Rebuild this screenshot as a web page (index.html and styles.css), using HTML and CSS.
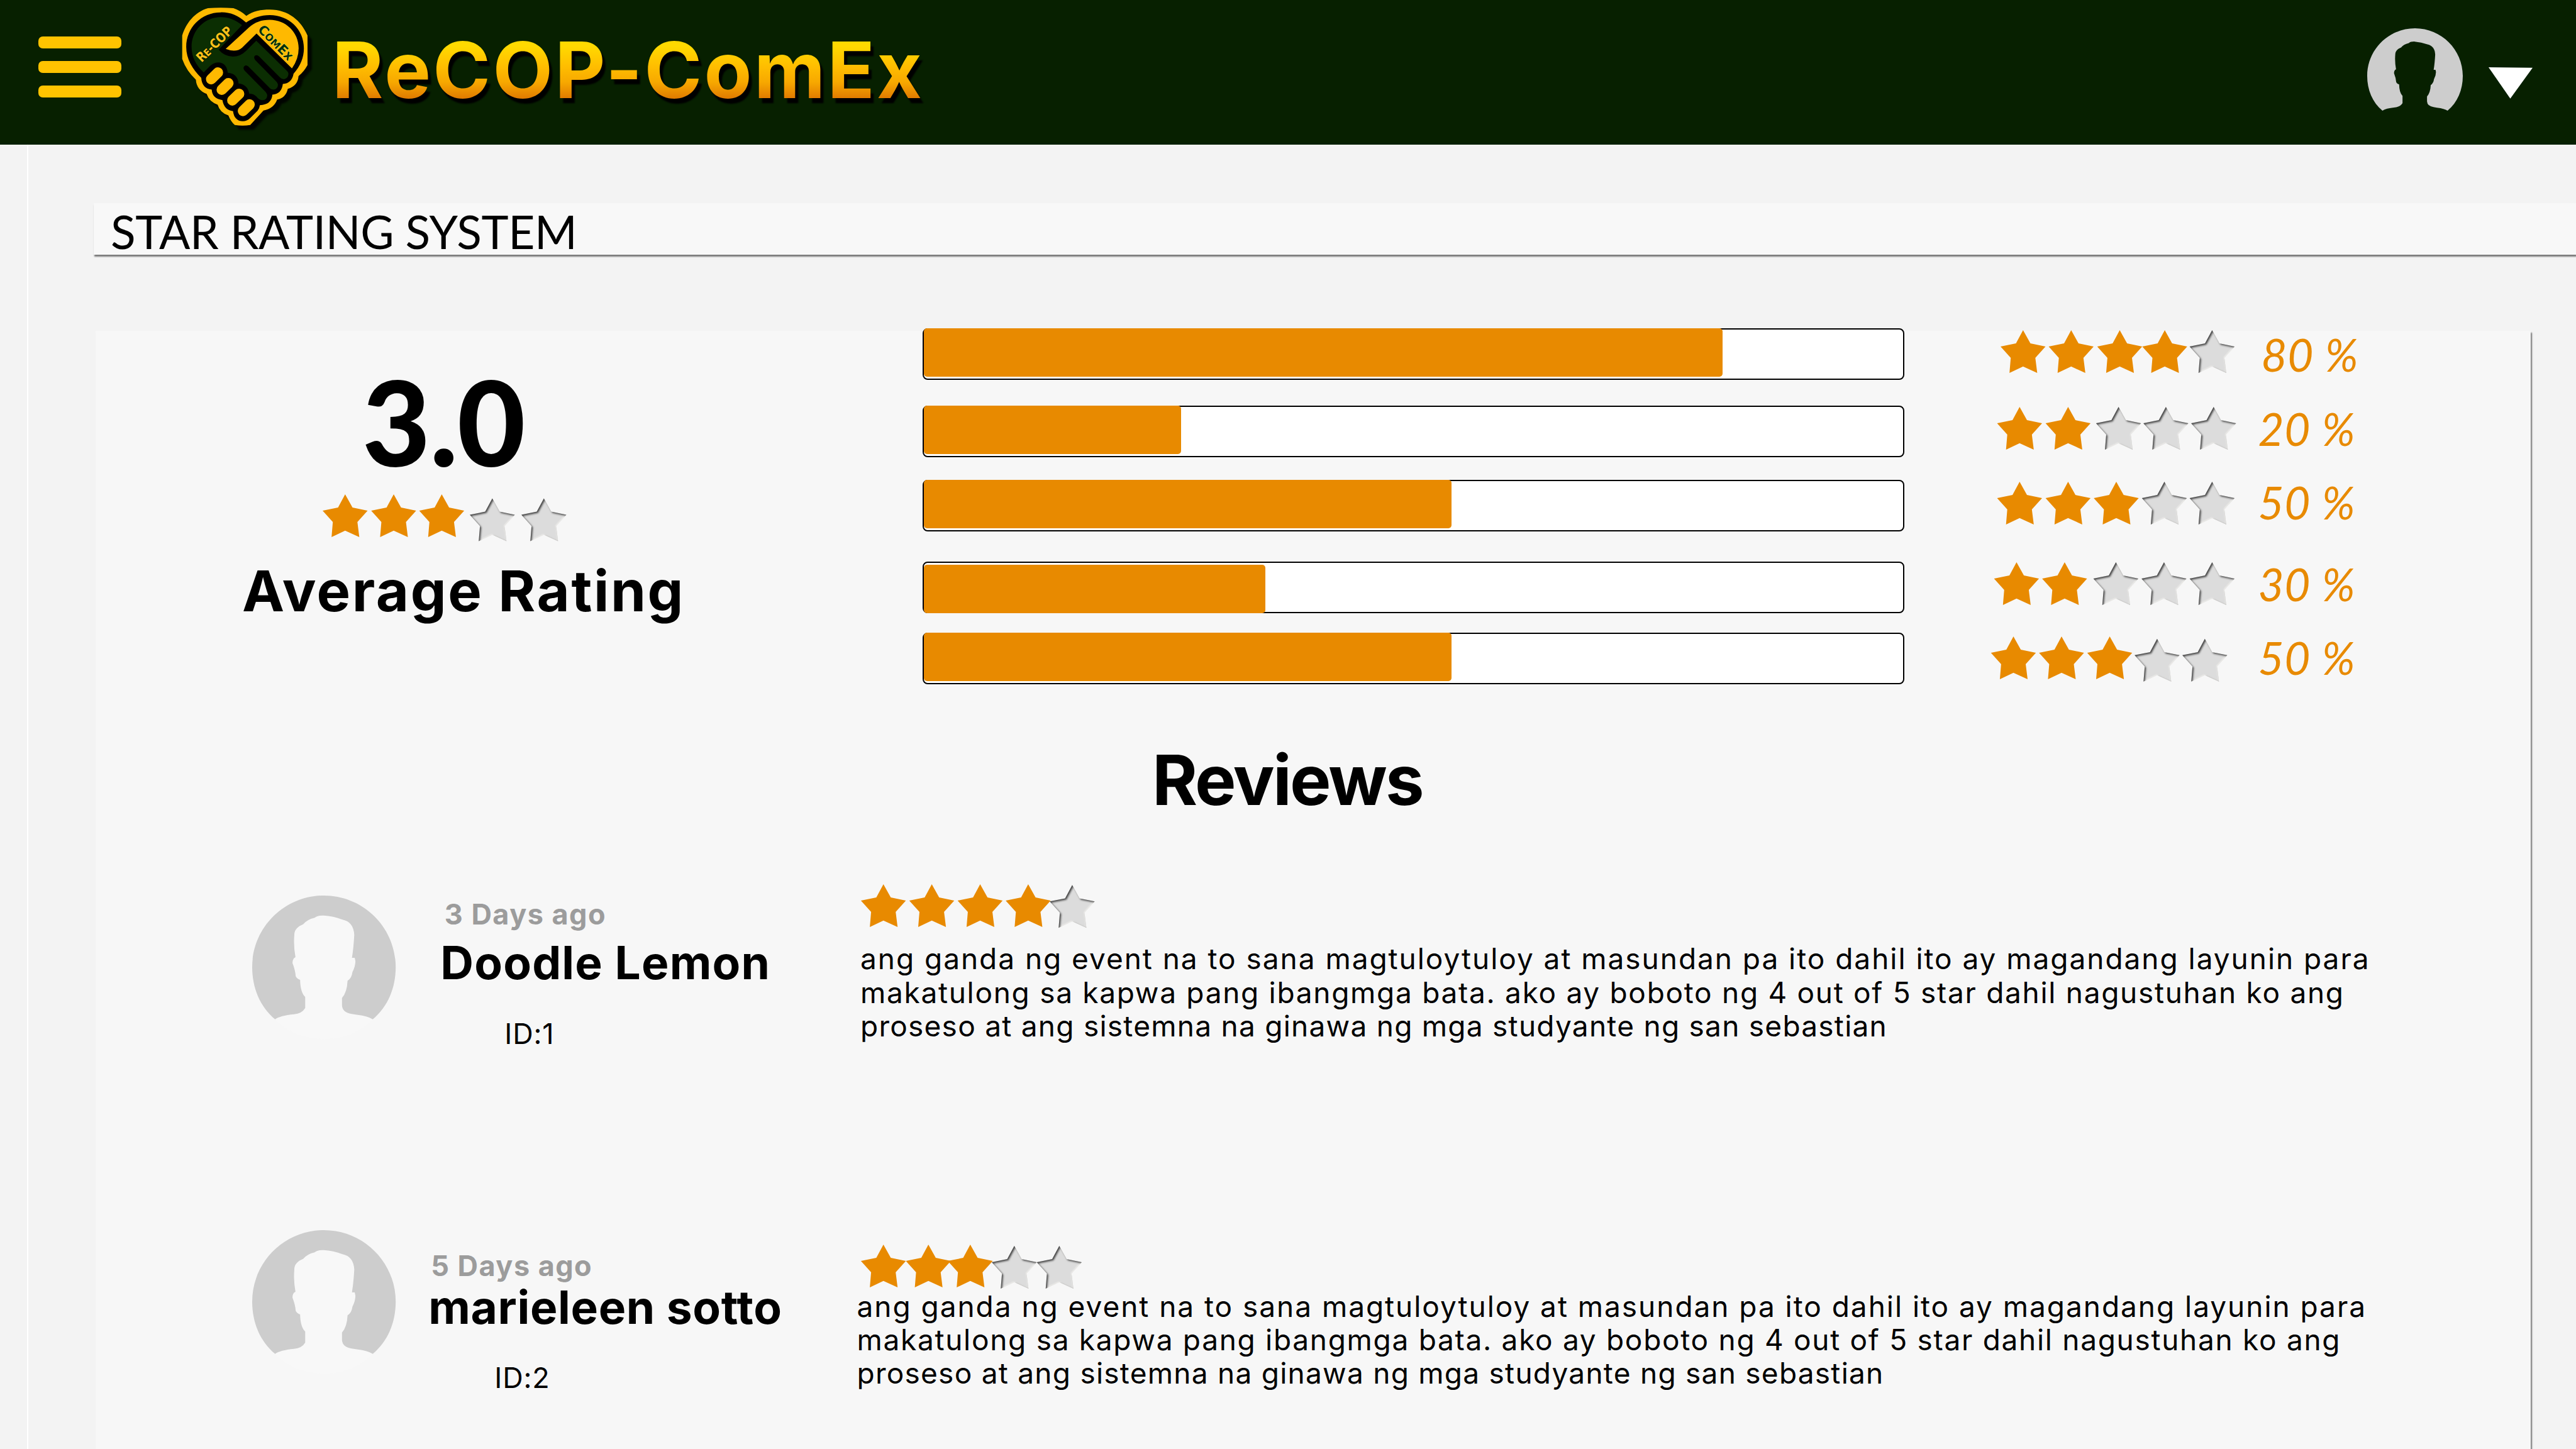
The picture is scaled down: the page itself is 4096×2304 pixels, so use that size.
FILE: index.html
```
<!DOCTYPE html>
<html lang="en">
<head>
<meta charset="utf-8">
<title>ReCOP-ComEx – Star Rating System</title>
<link rel="stylesheet" href="styles.css">
</head>
<body>
<svg class="defs" aria-hidden="true">
  <defs>
    <path id="star-shape" d="M35.8 0L47.5 21.1 71.5 26 55.3 43.9 58.3 68 35.8 57.8 14.2 68 16.2 43.9 0 26 24.5 21.1Z"/>
    <filter id="inset" x="-10%" y="-10%" width="120%" height="120%" color-interpolation-filters="sRGB">
      <feOffset in="SourceAlpha" dx="2" dy="2.4" result="off"/>
      <feGaussianBlur in="off" stdDeviation="1.4" result="soft"/>
      <feComposite in="SourceAlpha" in2="soft" operator="out" result="edge"/>
      <feFlood flood-color="#333" flood-opacity=".9"/>
      <feComposite in2="edge" operator="in" result="dark"/>
      <feOffset in="SourceAlpha" dx="-1.2" dy="-1.2" result="off2"/>
      <feGaussianBlur in="off2" stdDeviation="1.2" result="soft2"/>
      <feComposite in="SourceAlpha" in2="soft2" operator="out" result="edge2"/>
      <feFlood flood-color="#f0efec"/>
      <feComposite in2="edge2" operator="in" result="light"/>
      <feMerge><feMergeNode in="SourceGraphic"/><feMergeNode in="light"/><feMergeNode in="dark"/></feMerge>
    </filter>
    <g id="on"><use href="#star-shape" fill="#e88a00"/></g>
    <g id="off"><use href="#star-shape" fill="#dcdcdc" filter="url(#inset)"/></g>
    <path id="ring" d="M309 824C244 762 210 668 210 565C210 369 349 210 520 210S830 369 830 565C830 668 796 762 731 824Q712 808 662 801L640 797Q600 790 598 755V718Q620 690 622 633Q640 620 643 590Q656 560 656 535L653 519H641Q648 470 651 405Q648 340 600 329Q560 312 519 309Q492 308 480 320Q445 330 430 353Q392 370 392 405Q388 460 397 516Q384 522 384 545Q396 580 398 610Q402 622 417 628Q418 690 439 713V768Q425 796 390 799Q330 806 309 824Z"/>
    <path id="bust" d="M309 824Q330 806 390 799Q425 796 439 768V713Q418 690 417 628Q402 622 398 610Q396 580 384 545Q384 522 397 516Q388 460 392 405Q392 370 430 353Q445 330 480 320Q492 308 519 309Q560 312 600 329Q648 340 651 405Q648 470 641 519H653L656 535Q656 560 643 590Q640 620 622 633Q620 690 598 718V755Q600 790 640 797L662 801Q712 808 731 824C675 890 600 922 520 922S365 890 309 824Z"/>
  </defs>
</svg>

<header class="topbar">
  <button class="menu" aria-label="Menu"><span></span><span></span><span></span></button>
  <svg class="logo" viewBox="0 0 1260 1020" role="img" aria-label="Re-COP ComEx">
    <path class="logo-shadow" transform="translate(32 32)" d="M160 262L200 180 355 60H535L636 118Q720 72 810 72 920 72 1000 150L1092 265V485L1025 565Q1020 640 945 662 930 730 866 742 840 810 764 824L660 935H550L502 860Q440 840 422 780 360 760 340 700 265 670 260 594Q190 530 158 450Z"/>
    <path class="gold" d="M158 265C185 175 250 90 350 61Q445 55 540 61Q595 80 636 118C690 82 745 72 810 72C950 72 1045 155 1092 265V485Q1065 535 1025 567Q1020 640 945 662Q930 730 866 742Q840 810 764 824L665 932Q608 940 550 932Q520 905 502 860Q440 840 422 780Q360 760 340 700Q265 670 260 594Q190 530 158 440Z"/>
    <path class="ink" d="M634 168C570 110 510 90 445 92C300 92 188 205 188 350C188 440 235 515 300 580Q305 660 378 668Q382 735 458 746Q470 820 537 828Q545 900 610 904Q640 904 665 880L720 825Q735 805 737 784Q825 780 830 706Q900 700 908 626Q975 622 988 550C1040 490 1065 430 1065 360C1065 215 950 112 810 112C745 112 690 130 634 168Z"/>
    <path class="leaf" d="M604 188C555 148 505 128 445 128C325 128 228 225 228 350C228 425 260 485 318 540L370 488Q400 462 440 466Q490 475 498 543Q570 548 578 622Q645 628 658 698Q690 698 710 718Q730 745 758 747Q790 745 792 710Q792 700 780 685L622 525Q608 505 622 492Q636 482 650 495L805 650Q820 668 840 668Q870 664 872 632Q870 618 860 608L700 445Q688 425 702 414Q716 406 730 420L885 575Q900 592 920 590Q950 580 950 550Q950 540 940 530L710 304L635 378Q590 422 535 422Q470 418 430 370Z"/>
    <path class="gold" d="M482 365L655 205C700 165 750 148 810 148C930 148 1026 240 1026 360Q1026 440 976 510L712 250L605 355Q560 395 482 365Z"/>
    <g class="fingers"><path d="M424 541L374 590M502 620L453 669M582 700L532 748M660 779L611 827"/></g>
    <text class="mark mark-left" transform="translate(302 468) rotate(-44)" textLength="330" lengthAdjust="spacingAndGlyphs">R<tspan font-size="74">E</tspan>-COP</text>
    <text class="mark mark-right" transform="translate(716 226) rotate(45)" textLength="326" lengthAdjust="spacingAndGlyphs">C<tspan font-size="74">OM</tspan>E<tspan font-size="74">X</tspan></text>
  </svg>
  <h1 class="brand">ReCOP-ComEx</h1>
  <div class="account">
    <svg class="avatar-small" viewBox="210 210 620 712" preserveAspectRatio="none"><use href="#ring" fill="#cdcdcd"/></svg>
    <svg class="caret" viewBox="0 0 70 50"><path d="M0 0L70 .7 34.5 49.8Z" fill="#fff"/></svg>
  </div>
</header>

<main class="page">
  <h2 class="section-title">STAR RATING SYSTEM</h2>

  <div class="panel">
    <section class="summary">
      <div class="average">
        <div class="score">3.0</div>
        <svg class="stars" width="400" height="80"><use href="#on" x="0"/><use href="#on" x="77.2"/><use href="#on" x="153.6"/><use href="#off" x="234" y="6.5"/><use href="#off" x="316" y="6.5"/></svg>
        <div class="average-label">Average Rating</div>
      </div>
      <div class="bars">
        <div class="row">
          <div class="bar"><div class="fill" style="width:1270px"></div></div>
          <svg class="stars" width="400" height="80"><use href="#on" x="21" y="3"/><use href="#on" x="97.5" y="3"/><use href="#on" x="174.7" y="3"/><use href="#on" x="246.3" y="3"/><use href="#off" x="321.6" y="3"/></svg>
          <div class="pct pct-first">80 %</div>
        </div>
        <div class="row">
          <div class="bar"><div class="fill" style="width:409px"></div></div>
          <svg class="stars" width="400" height="80"><use href="#on" x="15.5" y="2"/><use href="#on" x="92.6" y="2"/><use href="#off" x="172.8" y="2"/><use href="#off" x="248.1" y="2"/><use href="#off" x="324" y="2"/></svg>
          <div class="pct pct-second">20 %</div>
        </div>
        <div class="row">
          <div class="bar"><div class="fill" style="width:839px"></div></div>
          <svg class="stars" width="400" height="80"><use href="#on" x="15.5" y="3"/><use href="#on" x="92.6" y="3"/><use href="#on" x="169.2" y="3"/><use href="#off" x="245.7" y="3"/><use href="#off" x="321.6" y="3"/></svg>
          <div class="pct">50 %</div>
        </div>
        <div class="row">
          <div class="bar"><div class="fill fill-low" style="width:543px"></div></div>
          <svg class="stars" width="400" height="80"><use href="#on" x="10.6" y="1"/><use href="#on" x="87.1" y="1"/><use href="#off" x="168.6" y="1"/><use href="#off" x="245.1" y="1"/><use href="#off" x="321.6" y="1"/></svg>
          <div class="pct">30 %</div>
        </div>
        <div class="row">
          <div class="bar"><div class="fill" style="width:839px"></div></div>
          <svg class="stars" width="400" height="80"><use href="#on" x="5.7" y="6"/><use href="#on" x="82.2" y="6"/><use href="#on" x="158.8" y="6"/><use href="#off" x="234.1" y="9.8"/><use href="#off" x="310" y="9.8"/></svg>
          <div class="pct pct-fifth">50 %</div>
        </div>
      </div>
    </section>

    <h3 class="reviews-title">Reviews</h3>

    <article class="review review-one">
      <svg class="avatar" viewBox="210 210 620 712" preserveAspectRatio="none"><use href="#bust" fill="#f8f8f8"/><use href="#ring" fill="#cdcdcd"/></svg>
      <div class="who">
        <div class="when">3 Days ago</div>
        <div class="name">Doodle Lemon</div>
        <div class="id">ID:1</div>
      </div>
      <div class="body">
        <svg class="stars" width="400" height="68"><use href="#on" x=".9"/><use href="#on" x="77.8"/><use href="#on" x="154.7"/><use href="#on" x="231.1"/><use href="#off" x="301.1" y="1.3"/></svg>
        <p class="comment">
          <span class="l1">ang ganda ng event na to sana magtuloytuloy at masundan pa ito dahil ito ay magandang layunin para</span>
          <span class="l2">makatulong sa kapwa pang ibangmga bata. ako ay boboto ng 4 out of 5 star dahil nagustuhan ko ang</span>
          <span class="l3">proseso at ang sistemna na ginawa ng mga studyante ng san sebastian</span>
        </p>
      </div>
    </article>

    <article class="review review-two">
      <svg class="avatar" viewBox="210 210 620 712" preserveAspectRatio="none"><use href="#bust" fill="#f8f8f8"/><use href="#ring" fill="#cdcdcd"/></svg>
      <div class="who">
        <div class="when">5 Days ago</div>
        <div class="name">marieleen sotto</div>
        <div class="id">ID:2</div>
      </div>
      <div class="body">
        <svg class="stars" width="400" height="68"><use href="#on" x=".9"/><use href="#on" x="72.4"/><use href="#on" x="139"/><use href="#off" x="209" y="2"/><use href="#off" x="280.5" y="2"/></svg>
        <p class="comment">
          <span class="l1">ang ganda ng event na to sana magtuloytuloy at masundan pa ito dahil ito ay magandang layunin para</span>
          <span class="l2">makatulong sa kapwa pang ibangmga bata. ako ay boboto ng 4 out of 5 star dahil nagustuhan ko ang</span>
          <span class="l3">proseso at ang sistemna na ginawa ng mga studyante ng san sebastian</span>
        </p>
      </div>
    </article>
  </div>
</main>
</body>
</html>
```
FILE: styles.css
```
* { box-sizing: border-box; }

body {
  margin: 0;
  width: 4096px;
  height: 2304px;
  overflow: hidden;
  background: #f3f3f3;
  color: #000;
  font-family: "Inter", "Liberation Sans", sans-serif;
  line-height: 1;
  white-space: nowrap;
}

h1, h2, h3, p { margin: 0; }
svg { display: block; overflow: visible; flex: none; }
.defs { position: absolute; width: 0; height: 0; }

/* Top bar */
.topbar {
  display: flex;
  align-items: flex-start;
  height: 230.4px;
  background: #072000;
}

.menu {
  display: flex;
  flex-direction: column;
  gap: 19.5px;
  width: 132px;
  margin: 58px 0 0 61px;
  padding: 0;
  border: 0;
  background: none;
}
.menu span { height: 19.3px; border-radius: 7px; background: #ffc300; }

.logo { width: 268.8px; height: 217.6px; margin-left: 63px; }
.gold { fill: #ffb900; }
.ink { fill: #000; }
.leaf { fill: #0b2e02; }
.logo-shadow { fill: #000; opacity: .85; filter: blur(8px); }
.fingers { fill: none; stroke: #ffb900; stroke-width: 78; stroke-linecap: round; }
.mark { font-family: "DejaVu Sans", sans-serif; font-weight: 700; font-size: 98px; paint-order: stroke; stroke-width: 6px; stroke-linejoin: round; }
.mark-left { fill: #ffc21a; stroke: #041800; }
.mark-right { fill: #06300c; stroke: #ffdf3a; }

.brand {
  margin: 49.2px 0 0 3.2px;
  font-size: 124px;
  font-weight: 700;
  letter-spacing: 3.3px;
  background: linear-gradient(#ffd900 20%, #ffbe00 45%, #f7a800 66%, #e07a00 87%);
  -webkit-background-clip: text;
  background-clip: text;
  color: transparent;
  filter: drop-shadow(5px 8px 1px #000);
}

.account { display: flex; gap: 41.4px; margin: 44.8px 69px 0 auto; }
.avatar-small { width: 152px; height: 152px; }
.caret { width: 70px; height: 50px; margin-top: 62.2px; }

/* Page */
.page {
  height: 2073.6px;
  margin-left: 43px;
  padding-top: 92.2px;
  border-left: 2px solid #fff;
}

.section-title {
  height: 82px;
  margin-left: 104px;
  padding: 9.4px 0 0 27px;
  background: #f8f8f8;
  box-shadow: 1px 3px 2px #777;
  font: 400 73px/1 "Lato", sans-serif;
  letter-spacing: -.36px;
}

.panel {
  display: flow-root;
  width: 3872.2px;
  height: 1777.7px;
  margin: 121.7px 0 0 106.6px;
  background: #f7f7f7;
  box-shadow: 2px 3px 2px #777;
}

/* Summary */
.summary { display: flex; height: 562px; }
.average { width: 1315.6px; padding-top: 49.3px; }
.score { margin-left: 424.4px; font: 900 187px/1 "Lato", sans-serif; letter-spacing: -1px; }
.average .stars { margin: 23.3px 0 0 361.5px; }
.average-label { margin: 29px 0 0 233.4px; font-size: 90px; font-weight: 700; letter-spacing: 2.6px; }

.bars { margin-top: -4.3px; }
.row { display: flex; height: 82px; margin-bottom: 41px; }
.row:nth-child(2) { margin-bottom: 36px; }
.row:nth-child(3) { margin-bottom: 48px; }
.row:nth-child(4) { margin-bottom: 31px; }
.bar { width: 1561px; border: 2px solid #000; border-radius: 8px; background: #fff; }
.fill { height: 77px; margin-top: -2px; border-radius: 5px; background: #e88a00; }
.fill-low { margin-top: 3px; }
.row .stars { margin-left: 131.7px; }
.pct {
  margin-left: 30.5px;
  color: #e88a00;
  font: italic 400 71px/1 "Lato", sans-serif;
  letter-spacing: .8px;
}
.pct-first { margin: 6.5px 0 0 35.5px; }
.pct-second { margin-top: 1.5px; }
.pct-fifth { margin-top: 4.5px; }

/* Reviews */
.reviews-title { margin: 96.7px 0 0 1680.4px; font-size: 110px; font-weight: 700; letter-spacing: -2.8px; }
.review { display: flex; align-items: flex-start; margin-left: 249.5px; }
.review-one { height: 550px; margin-top: 111.3px; }
.avatar { width: 228.2px; height: 228.2px; }
.who { width: 738.7px; }
.when { color: #9c9c9c; font-size: 45px; font-weight: 700; letter-spacing: 1.45px; }
.name { font-size: 73px; font-weight: 700; }
.id { font-size: 45px; letter-spacing: .8px; }
.comment { display: flex; flex-direction: column; font-size: 46px; line-height: 53.4px; }
.l1 { letter-spacing: 1.96px; }
.l2 { letter-spacing: 1.7px; }
.l3 { letter-spacing: 1.25px; }

.review-one .avatar { margin-top: 17.3px; }
.review-one .when { margin: 24.7px 0 0 77.5px; }
.review-one .name { margin: 18.2px 0 0 71px; letter-spacing: 1.2px; }
.review-one .id { margin: 53.4px 0 0 173px; }
.review-one .comment { margin-top: 24px; }

.review-two .when { margin: 34.2px 0 0 56px; }
.review-two .name { margin: 6.1px 0 0 52px; letter-spacing: .65px; }
.review-two .id { margin: 53.8px 0 0 157px; }
.review-two .body { margin-top: 23.2px; }
.review-two .comment { margin: 3.1px 0 0 -5.5px; }
```
